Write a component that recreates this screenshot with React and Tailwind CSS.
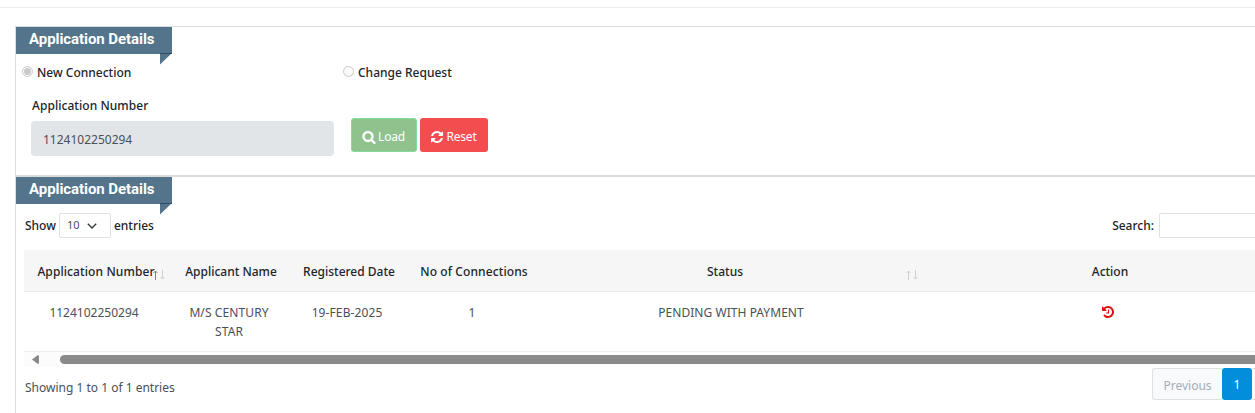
import clsx from 'clsx';

const columns = [
  { label: 'Application Number', width: 'w-[141px]', align: 'pl-[3px] tracking-[0.1px]', sort: 'asc' },
  { label: 'Applicant Name', width: 'w-[129px]', align: 'pl-[3px]' },
  { label: 'Registered Date', width: 'w-[106px]', align: 'pl-[4px]' },
  { label: 'No of Connections', width: 'w-[144px]', align: 'pl-[4px] tracking-[0.1px]' },
  { label: 'Status', width: 'w-[374px]', align: 'pr-[12px]', sort: 'none' },
  { label: 'Action', width: 'w-[380px]', align: 'pl-[4px]' },
];

function SearchIcon() {
  return (
    <svg viewBox="0 0 1792 1792" className="h-[14px] w-[14px]" fill="currentColor" stroke="currentColor" strokeWidth="40">
      <path d="M1216 832q0-185-131.5-316.5t-316.5-131.5-316.5 131.5-131.5 316.5 131.5 316.5 316.5 131.5 316.5-131.5 131.5-316.5zm512 832q0 52-38 90t-90 38q-54 0-90-38l-343-342q-179 124-399 124-143 0-273.5-55.5t-225-150-150-225-55.5-273.5 55.5-273.5 150-225 225-150 273.5-55.5 273.5 55.5 225 150 150 225 55.5 273.5q0 220-124 399l343 343q37 37 37 90z" />
    </svg>
  );
}

function RefreshIcon() {
  return (
    <svg viewBox="0 0 1536 1536" className="h-[12px] w-[12px]" fill="currentColor">
      <path d="M1511 928q0 5-1 7-64 268-268 434.5t-478 166.5q-146 0-282.5-55t-243.5-157l-129 129q-19 19-45 19t-45-19-19-45v-448q0-26 19-45t45-19h448q26 0 45 19t19 45-19 45l-137 137q71 66 161 102t187 36q134 0 250-65t186-179q11-17 53-117 8-23 30-23h192q13 0 22.5 9.5t9.5 22.5zm25-800v448q0 26-19 45t-45 19h-448q-26 0-45-19t-19-45 19-45l138-138q-148-137-349-137-134 0-250 65t-186 179q-11 17-53 117-8 23-30 23h-199q-13 0-22.5-9.5t-9.5-22.5v-7q65-268 270-434.5t480-166.5q146 0 284 55.5t245 156.5l130-129q19-19 45-19t45 19 19 45z" />
    </svg>
  );
}

function HistoryIcon() {
  return (
    <svg viewBox="0 0 1792 1792" className="h-[14px] w-[14px]" fill="currentColor">
      <path d="M1664 896q0 156-61 298t-164 245-245 164-298 61q-172 0-327-72.5t-264-204.5q-7-10-6.5-22.5t8.5-20.5l137-138q10-9 25-9 16 2 23 12 73 95 179 147t225 52q104 0 198.5-40.5t163.5-109.5 109.5-163.5 40.5-198.5-40.5-198.5-109.5-163.5-163.5-109.5-198.5-40.5q-98 0-188 35.5t-160 101.5l137 138q31 30 14 69-17 40-59 40h-448q-26 0-45-19t-19-45v-448q0-42 40-59 39-17 69 14l130 129q107-101 244.5-156.5t284.5-55.5q156 0 298 61t245 164 164 245 61 298zm-640-288v448q0 14-9 23t-23 9h-320q-14 0-23-9t-9-23v-64q0-14 9-23t23-9h224v-352q0-14 9-23t23-9h64q14 0 23 9t9 23z" />
    </svg>
  );
}

function SortArrows({ direction }) {
  return (
    <svg viewBox="0 0 12 10" className="absolute right-0 top-[20px] h-[10px] w-[12px]" fill="none">
      <path d="M2.500 10V1M.5 3L2.500 1L4.500 3" stroke={direction === 'asc' ? '#85817c' : '#cfcfcf'} />
      <path d="M9.500 0V9M7.500 7L9.500 9L11.500 7" stroke="#cfcfcf" />
    </svg>
  );
}

function Ribbon({ children }) {
  return (
    <div className="relative h-[27px] w-[156px] bg-[#53748b] pl-[13px] font-[Roboto,sans-serif] text-[15px] font-bold leading-[24px] tracking-[-0.07px] text-white">
      {children}
      <svg viewBox="0 0 12 12" className="absolute right-0 top-[26px] h-[12px] w-[12px]">
        <path d="M0 0H12L0 11.5Z" fill="#53748b" />
        <path d="M0 .5H12" stroke="#294f66" />
      </svg>
    </div>
  );
}

function Radio({ label, checked }) {
  return (
    <label className="flex items-center gap-[4px]">
      <span className="mb-[3px] flex h-[11px] w-[11px] items-center justify-center rounded-full border border-[#cbcbcb] bg-[#fafafa]">
        {checked && <span className="h-[7px] w-[7px] rounded-full bg-[#cacaca]" />}
      </span>
      {label}
    </label>
  );
}

export default function App() {
  return (
    <div className="h-[413px] overflow-hidden bg-white font-['Noto_Sans',sans-serif] text-[12px] font-medium text-[#212529]">
      <div className="h-[8px] border-b border-[#ececec]" />

      <section className="ml-[15px] mt-[18px] h-[150px] border-y border-l border-[#d9dcdd]">
        <Ribbon>Application Details</Ribbon>
        <div className="flex h-[36px] items-center pl-[6px] pt-[2px]">
          <div className="w-[321px]">
            <Radio label="New Connection" checked />
          </div>
          <Radio label="Change Request" />
        </div>
        <div className="flex pl-[15px]">
          <div className="w-[303px]">
            <div className="mt-[7px] h-[24px] pl-px leading-[18px] tracking-[0.05px]">Application Number</div>
            <div className="h-[35px] rounded-[4px] bg-[#e1e5e8] pl-[12px] font-normal leading-[37px] text-[#495057]">
              1124102250294
            </div>
          </div>
          <div className="ml-[17px] mt-[28px] flex gap-[3px] font-normal text-white">
            <button className="flex h-[34px] w-[66px] items-center justify-center gap-[2px] rounded-[3px] border border-[#7fdb9e] bg-[#8fc28c] pr-px pt-[3px] tracking-[-0.2px]">
              <SearchIcon />
              Load
            </button>
            <button className="flex h-[34px] w-[68px] items-center justify-center gap-[3px] rounded-[3px] bg-[#f44d4f] pt-[3px] tracking-[-0.2px]">
              <RefreshIcon />
              Reset
            </button>
          </div>
        </div>
      </section>

      <section className="ml-[15px] h-[260px] border-l border-t border-[#d9dcdd]">
        <Ribbon>Application Details</Ribbon>
        <div className="mt-[9px] flex h-[25px] items-center pl-[8px]">
          <span className="pl-px">Show</span>
          <div className="ml-[3px] flex h-[25px] w-[52px] items-center rounded-[2px] border border-[#dee2e6] pl-[7px] text-[11px] font-normal text-[#495057]">
            10
            <svg viewBox="0 0 10 6" className="ml-[7px] h-[6px] w-[10px]" fill="none">
              <path d="M.8 .8L5 5L9.200 .8" stroke="#343a40" strokeWidth="1.4" />
            </svg>
          </div>
          <span className="ml-[3px]">entries</span>
          <div className="ml-auto flex items-center">
            Search:
            <span className="ml-[5px] h-[25px] w-[96px] rounded-l-[2px] border-y border-l border-[#dee2e6]" />
          </div>
        </div>

        <div className="ml-[8px] mt-[12px] overflow-hidden">
          <table className="w-[1274px] table-fixed text-center">
            <thead>
              <tr className="h-[41px] border-b border-[#ebedee] bg-[#f6f6f6]">
                {columns.map((col) => (
                  <th key={col.label} className={clsx('whitespace-nowrap p-0 font-medium', col.width)}>
                    <div className={clsx('relative flex h-[41px] items-center justify-center pt-[3px]', col.align)}>
                      {col.label}
                      {col.sort && <SortArrows direction={col.sort} />}
                    </div>
                  </th>
                ))}
              </tr>
            </thead>
            <tbody>
              <tr className="h-[60px] border-b border-[#ebedee] align-top font-normal leading-[19px] text-[#495057]">
                <td className="pr-px pt-[11px]">1124102250294</td>
                <td className="pr-px pt-[11px] tracking-[0.1px]">
                  M/S CENTURY
                  <br />
                  STAR
                </td>
                <td className="pt-[11px] tracking-[0.1px]">19-FEB-2025</td>
                <td className="pt-[11px]">1</td>
                <td className="pt-[11px] tracking-[0.05px]">PENDING WITH PAYMENT</td>
                <td className="pt-[13px]">
                  <span className="flex justify-center text-[#e0100f]">
                    <HistoryIcon />
                  </span>
                </td>
              </tr>
            </tbody>
          </table>
          <div className="flex h-[15px] items-center bg-[#fcfcfc] pl-[8px]">
            <svg viewBox="0 0 7 9" className="h-[9px] w-[7px]">
              <path d="M0 4.500L5.500 .2Q7 0 7 1V8Q7 9 5.500 8.800Z" fill="#8a8a8a" />
            </svg>
            <div className="ml-[21px] h-[9px] grow rounded-l-full bg-[#8a8a8a]" />
          </div>
        </div>

        <div className="flex justify-between pl-[8px] font-normal text-[#495057]">
          <div className="mt-[12px] pl-px leading-[18px]">Showing 1 to 1 of 1 entries</div>
          <div className="mt-px flex h-[32px] leading-[33px]">
            <div className="w-[70px] rounded-l-[3px] border-y border-l border-[#dee2e6] bg-[#f8fafc] text-center text-[#a6adb4]">
              Previous
            </div>
            <div className="w-[30px] rounded-[3px] bg-[#038edc] text-center text-white">1</div>
            <div className="w-[3px] border-y border-[#dee2e6] bg-[#f8fafc]" />
          </div>
        </div>
      </section>
    </div>
  );
}
